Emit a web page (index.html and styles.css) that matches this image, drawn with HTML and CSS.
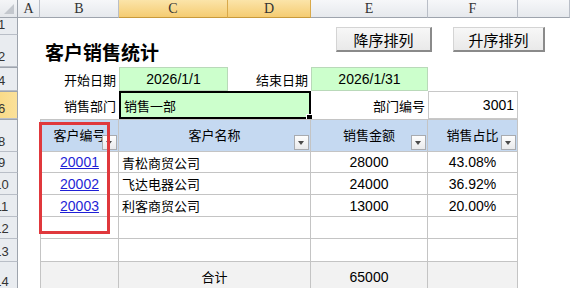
FILE: index.html
```html
<!DOCTYPE html>
<html lang="zh-CN">
<head>
  <meta charset="UTF-8">
  <title>客户销售统计</title>
  <link rel="stylesheet" href="styles.css">
</head>
<body>
  <div class="sheet">
    <!-- column headers -->
    <div class="corner"><span class="tri"></span></div>
    <div class="colh">A</div>
    <div class="colh">B</div>
    <div class="colh sel">C</div>
    <div class="colh sel">D</div>
    <div class="colh">E</div>
    <div class="colh">F</div>
    <div class="colh"></div>

    <!-- row 1 -->
    <div class="rowh"><span>1</span></div>
    <div class="span7"></div>

    <!-- row 2: title -->
    <div class="rowh"><span>2</span></div>
    <div></div>
    <div class="title span3">客户销售统计</div>
    <div class="span3"></div>

    <!-- row 4: dates -->
    <div class="rowh hid"><span>4</span></div>
    <div></div>
    <div class="lbl">开始日期</div>
    <div class="inp green num center">2026/1/1</div>
    <div class="lbl">结束日期</div>
    <div class="inp green num center">2026/1/31</div>
    <div></div>
    <div></div>

    <!-- row 6: department -->
    <div class="rowh hid sel"><span>6</span></div>
    <div></div>
    <div class="lbl">销售部门</div>
    <div class="active green span2 cjk">销售一部</div>
    <div class="lbl">部门编号</div>
    <div class="inp num right">3001</div>
    <div></div>

    <!-- row 8: table header -->
    <div class="rowh hid"><span>8</span></div>
    <div></div>
    <div class="t th first">客户编号<span class="flt"></span></div>
    <div class="t th span2">客户名称<span class="flt"></span></div>
    <div class="t th">销售金额<span class="flt"></span></div>
    <div class="t th">销售占比<span class="flt"></span></div>
    <div></div>

    <!-- rows 9-11: data -->
    <div class="rowh"><span>9</span></div>
    <div></div>
    <div class="t first center num"><a href="#">20001</a></div>
    <div class="t span2 cjk">青松商贸公司</div>
    <div class="t center num">28000</div>
    <div class="t center num">43.08%</div>
    <div></div>

    <div class="rowh"><span>10</span></div>
    <div></div>
    <div class="t first center num"><a href="#">20002</a></div>
    <div class="t span2 cjk">飞达电器公司</div>
    <div class="t center num">24000</div>
    <div class="t center num">36.92%</div>
    <div></div>

    <div class="rowh"><span>11</span></div>
    <div></div>
    <div class="t first center num"><a href="#">20003</a></div>
    <div class="t span2 cjk">利客商贸公司</div>
    <div class="t center num">13000</div>
    <div class="t center num">20.00%</div>
    <div></div>

    <!-- rows 12-13: empty -->
    <div class="rowh"><span>12</span></div>
    <div></div>
    <div class="t first"></div>
    <div class="t span2"></div>
    <div class="t"></div>
    <div class="t"></div>
    <div></div>

    <div class="rowh"><span>13</span></div>
    <div></div>
    <div class="t first"></div>
    <div class="t span2"></div>
    <div class="t"></div>
    <div class="t"></div>
    <div></div>

    <!-- row 14: total -->
    <div class="rowh"><span>14</span></div>
    <div></div>
    <div class="t first total"></div>
    <div class="t span2 total center cjk">合计</div>
    <div class="t total center num">65000</div>
    <div class="t total"></div>
    <div></div>

    <!-- floating objects -->
    <button class="btn btn-desc">降序排列</button>
    <button class="btn btn-asc">升序排列</button>
    <div class="mark"></div>
  </div>
</body>
</html>
```

FILE: styles.css
```css
:root {
  --grid: #c4c4c4;
  --hdr-line: #b9bec7;
  --hdr-dark: #9ea4ad;
  --green: #ccffcc;
  --blue: #c5d9f1;
}

body {
  margin: 0;
  overflow: hidden;
  background: #fff;
  color: #000;
  font-family: "Liberation Sans", "Noto Sans CJK SC", sans-serif;
}

.sheet {
  position: relative;
  width: 570px;
  height: 288px;
  overflow: hidden;
  display: grid;
  grid-template-columns: 18px 22px 79px 109px 83px 117px 90px 1fr;
  grid-template-rows: 18px 17px 32px 24px 28px 33px 21px 22px 22px 22px 23px 30px;
}
.sheet > div { box-sizing: border-box; min-width: 0; }

.span2 { grid-column: span 2; }
.span3 { grid-column: span 3; }
.span7 { grid-column: span 7; }

/* headers */
.corner {
  margin-left: -14px;
  width: 32px;
  position: relative;
  background: linear-gradient(#f4f5f7, #e4e7eb);
  border-right: 1px solid var(--hdr-dark);
  border-bottom: 1px solid var(--hdr-dark);
}
.corner .tri {
  position: absolute; right: 3px; bottom: 3px;
  border-left: 10px solid transparent;
  border-bottom: 10px solid #c3c7cd;
}
.colh {
  display: flex; justify-content: center; align-items: center;
  font: 14px "Liberation Serif", serif;
  color: #333;
  background: linear-gradient(#f6f7f9, #e6e9ed);
  border-right: 1px solid var(--hdr-line);
  border-bottom: 1px solid var(--hdr-dark);
}
.colh.sel { background: linear-gradient(#fbe4a9, #f5cc72); border-right-color: #d9a94a; border-bottom-color: #c89a3c; }
.rowh {
  margin-left: -14px;
  width: 32px;
  display: flex; justify-content: center; align-items: flex-end;
  padding-bottom: 2px;
  font-size: 13px;
  color: #333;
  background: #e9ecf0;
  border-right: 1px solid var(--hdr-dark);
  border-bottom: 1px solid var(--hdr-line);
}
.rowh.hid { border-top: 1px solid var(--hdr-dark); }
.rowh.sel { background: linear-gradient(90deg, #f9d67a, #fbe19a); }

/* cells */
.title {
  display: flex; align-items: center;
  padding-left: 5px;
  font: bold 19px "Noto Sans CJK SC", sans-serif;
  white-space: nowrap;
}
.lbl {
  display: flex; justify-content: flex-end; align-items: center;
  padding-right: 3px;
  font-size: 13px;
  white-space: nowrap;
}
.inp { display: flex; align-items: center; padding: 0 3px; border: 1px solid #c8c8c8; }
.green { background: var(--green); border-color: #b9d9b9; }
.num { font-size: 14px; }
.cjk { font-size: 13px; }
.center { justify-content: center; }
.right { justify-content: flex-end; }

.active {
  position: relative;
  display: flex; align-items: center;
  padding-left: 3px;
  border: 2px solid #000;
}
.active::after {
  content: "";
  position: absolute; right: -4px; bottom: -4px;
  width: 5px; height: 5px;
  background: #000;
  border: 1px solid #fff;
}

.t {
  display: flex; align-items: center;
  padding: 0 3px;
  white-space: nowrap;
  border-right: 1px solid var(--grid);
  border-bottom: 1px solid var(--grid);
}
.t.first { border-left: 1px solid var(--grid); }
.th {
  position: relative;
  justify-content: center;
  font-size: 13px;
  background: var(--blue);
  border-top: 1px solid var(--grid);
  padding-bottom: 2px;
}
.total { background: #f2f2f2; }
.t a { color: #1f1fd6; text-decoration: underline; }

.flt {
  position: absolute; right: 1px; bottom: 1px;
  width: 15px; height: 15px;
  box-sizing: border-box;
  border: 1px solid #a8abb0;
  background: linear-gradient(#fdfdfd, #e9eaec);
}
.flt::after {
  content: "";
  position: absolute; left: 3px; top: 5px;
  border-left: 3.5px solid transparent;
  border-right: 3.5px solid transparent;
  border-top: 4px solid #4a4a4a;
}

/* floating shapes on the sheet */
.btn {
  position: absolute; top: 27px; height: 25px;
  padding: 0;
  font: 15px "Noto Sans CJK SC", sans-serif;
  color: #000;
  background: linear-gradient(#f7f7f7, #e9e9e9);
  border: 1px solid #d4d4d4;
  border-right: 2px solid #8a8a8a;
  border-bottom: 2px solid #8a8a8a;
}
.btn-desc { left: 336px; width: 96px; }
.btn-asc { left: 453px; width: 92px; }

.mark {
  position: absolute; left: 39px; top: 122px;
  width: 71px; height: 112px;
  box-sizing: border-box;
  border: 3px solid #e0383c;
}
```
